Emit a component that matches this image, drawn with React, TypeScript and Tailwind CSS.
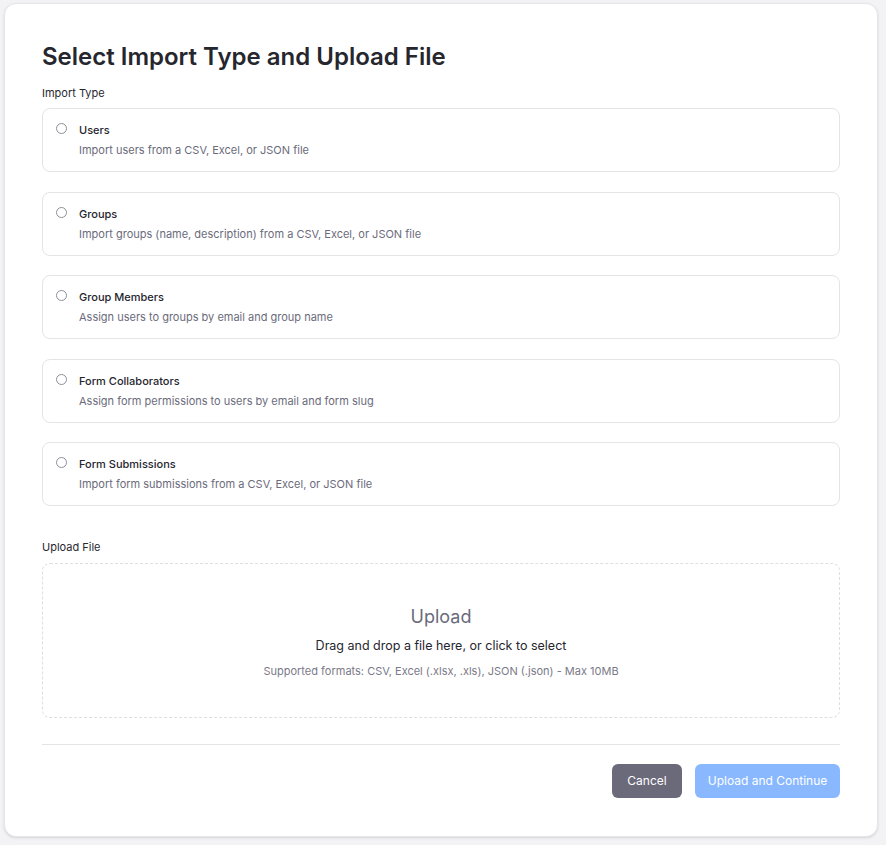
const importTypes = [
  { name: 'Users', description: 'Import users from a CSV, Excel, or JSON file' },
  { name: 'Groups', description: 'Import groups (name, description) from a CSV, Excel, or JSON file' },
  { name: 'Group Members', description: 'Assign users to groups by email and group name' },
  { name: 'Form Collaborators', description: 'Assign form permissions to users by email and form slug' },
  { name: 'Form Submissions', description: 'Import form submissions from a CSV, Excel, or JSON file' },
];

export default function App() {
  return (
    <div className="min-h-screen bg-[#f3f3f5] pl-1 pr-2 pt-[3px] pb-2 font-['Inter',sans-serif] text-[#27272f]">
      <div className="rounded-xl border border-[#e6e6ea] bg-white px-[37px] pt-[37px] pb-[38px] shadow-sm">
        <h1 className="text-2xl font-semibold leading-8 text-[#26262e]">
          Select Import Type and Upload File
        </h1>

        <p className="mt-3 text-[11px] leading-4">Import Type</p>
        <div className="mt-[7px] flex flex-col gap-[19.5px]">
          {importTypes.map((t) => (
            <label
              key={t.name}
              className="flex cursor-pointer items-start gap-3 rounded-lg border border-[#e4e4e7] pl-[13px] pr-3 py-[13px]"
            >
              <span className="mt-[1px] h-[11px] w-[11px] shrink-0 rounded-full border border-[#8e8e99] bg-white" />
              <span className="flex flex-col gap-1">
                <span className="text-[11px] font-medium leading-4 text-[#26262e]">{t.name}</span>
                <span className="text-[11px] leading-4 text-[#6b6b7b]">{t.description}</span>
              </span>
            </label>
          ))}
        </div>

        <p className="mt-[33px] text-[11px] leading-4">Upload File</p>
        <div className="mt-2 flex h-[155px] cursor-pointer flex-col items-center justify-center rounded-lg border border-dashed border-[#dedee3]">
          <p className="text-lg leading-7 text-[#6b6b7b]">Upload</p>
          <p className="mt-[5px] text-[12.5px] leading-5 text-[#26262e]">
            Drag and drop a file here, or click to select
          </p>
          <p className="mt-[7px] text-[11px] leading-4 text-[#7a7a88]">
            Supported formats: CSV, Excel (.xlsx, .xls), JSON (.json) - Max 10MB
          </p>
        </div>

        <div className="mt-[26px] flex justify-end gap-[13px] border-t border-[#e4e4e7] pt-[19px]">
          <button className="h-[34px] w-[70px] rounded-md bg-[#6b6a7b] text-xs text-white">
            Cancel
          </button>
          <button className="h-[34px] w-[145px] rounded-md bg-[#89b8ff] text-xs text-white">
            Upload and Continue
          </button>
        </div>
      </div>
    </div>
  );
}
